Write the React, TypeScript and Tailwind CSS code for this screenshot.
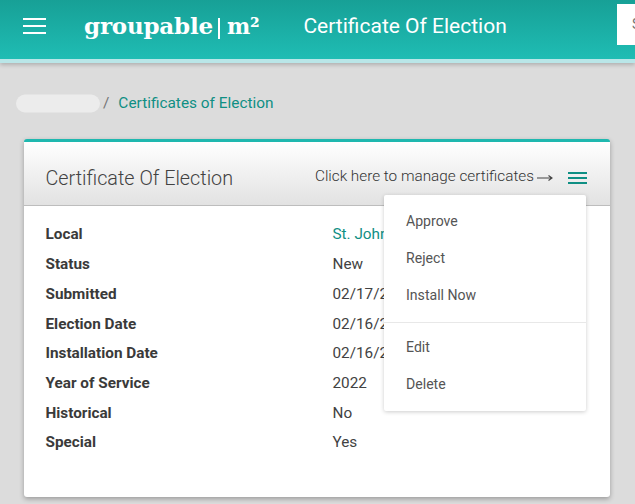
const rows: [string, string][] = [
  ["Local", "St. John's"],
  ["Status", "New"],
  ["Submitted", "02/17/2022"],
  ["Election Date", "02/16/2022"],
  ["Installation Date", "02/16/2022"],
  ["Year of Service", "2022"],
  ["Historical", "No"],
  ["Special", "Yes"],
];

function Bars({ className, w, gap, h }: { className: string; w: string; gap: string; h: string }) {
  return (
    <div className={`flex flex-col ${gap} ${w}`}>
      <span className={`block ${h} ${className}`} />
      <span className={`block ${h} ${className}`} />
      <span className={`block ${h} ${className}`} />
    </div>
  );
}

export default function App() {
  return (
    <div className="h-[504px] w-[635px] overflow-hidden bg-[#dcdcdc] font-['Roboto',sans-serif] text-[#424242]">
      <header className="relative h-[63px] border-b-4 border-[#b9e6e8] bg-gradient-to-b from-[#17a096] to-[#1fbdb4] shadow-[0_2px_4px_rgba(0,0,0,0.2)]">
        <div className="flex h-[59px] items-center pb-[7px] pl-[23px]">
          <Bars className="bg-white" w="w-[23px]" gap="gap-[5px]" h="h-[2px]" />
          <div className="ml-[38px] flex items-center font-['DejaVu_Serif',serif] font-bold text-white">
            <span className="text-[23px] tracking-[-0.2px]">groupable</span>
            <span className="ml-[5px] mr-[7px] block h-[21px] w-[2px] translate-y-[2px] bg-white" />
            <span className="text-[22px] tracking-[-0.2px]">m²</span>
          </div>
          <div className="ml-[44px] translate-y-[1px] text-[21px] text-white">Certificate Of Election</div>
        </div>
        <div className="absolute left-[617px] top-[4px] flex h-[41px] w-[18px] items-center bg-white pl-[15px] text-[14px] text-[#757575]">
          S
        </div>
      </header>

      <nav className="mt-[31.5px] flex h-[18px] items-center pl-4 text-[15.4px]">
        <span className="block h-[18px] w-[84px] -translate-y-[0.5px] rounded-[9px] bg-[#ececec]" />
        <span className="ml-[3px] text-[#757575]">/</span>
        <span className="ml-[9px] text-[#0f8f84]">Certificates of Election</span>
      </nav>

      <section className="relative ml-[24px] mt-[26.5px] h-[358px] w-[586px] rounded-[3px] border-t-[3px] border-[#1fb8af] bg-white shadow-[0_2px_5px_rgba(0,0,0,0.3)]">
        <div className="flex h-[64px] items-center justify-between border-b border-[#bdbdbd] bg-gradient-to-b from-white to-[#e2e2e2] pl-[21.5px] pr-[23px] pt-[10px]">
          <h1 className="text-[19.8px] font-light text-[#424242]">Certificate Of Election</h1>
          <div className="mb-[5px] flex items-center">
            <span className="text-[15.3px] font-light text-[#333]">Click here to manage certificates</span>
            <svg className="ml-[3px] mt-[3px]" width="16" height="10" viewBox="0 0 16 10" fill="none" stroke="#444" strokeWidth="1.1">
              <path d="M0 5H15M11.5 2.5L15 5L11.5 7.5" />
            </svg>
            <div className="ml-[15px] mt-[3px]">
              <Bars className="bg-[#0f8f84]" w="w-[19px]" gap="gap-[3px]" h="h-[2px]" />
            </div>
          </div>
        </div>

        <dl className="grid grid-cols-[287px_1fr] pl-[21.5px] pt-[14.4px] text-[15.3px] leading-[29.7px]">
          {rows.map(([k, v], i) => (
            <div key={k} className="contents">
              <dt className="font-bold text-[#3a3a3a]">{k}</dt>
              <dd className={i === 0 ? "text-[#0f8f84]" : "text-[#424242]"}>{v}</dd>
            </div>
          ))}
        </dl>

        <div className="absolute left-[359.5px] top-[53px] w-[202.5px] rounded-[2px] bg-white py-[8px] text-[14.1px] text-[#555] shadow-[0_1px_4px_rgba(0,0,0,0.2)]">
          <div className="flex h-[37px] items-center pl-[22.5px]">Approve</div>
          <div className="flex h-[37px] items-center pl-[22.5px]">Reject</div>
          <div className="flex h-[37px] items-center pl-[22.5px]">Install Now</div>
          <div className="mb-[6px] mt-[8px] h-[1px] bg-[#e8e8e8]" />
          <div className="flex h-[37px] items-center pl-[22.5px]">Edit</div>
          <div className="flex h-[37px] items-center pl-[22.5px]">Delete</div>
        </div>
      </section>
    </div>
  );
}
